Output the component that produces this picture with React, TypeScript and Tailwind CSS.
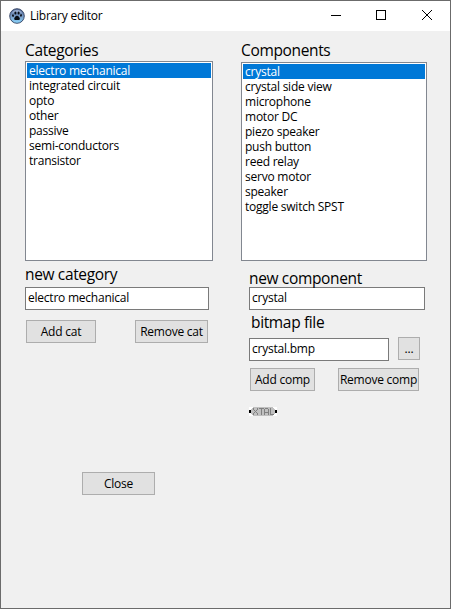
import type { ReactNode } from "react";

const categories = [
  "electro mechanical",
  "integrated circuit",
  "opto",
  "other",
  "passive",
  "semi-conductors",
  "transistor",
];

const components = [
  "crystal",
  "crystal side view",
  "microphone",
  "motor DC",
  "piezo speaker",
  "push button",
  "reed relay",
  "servo motor",
  "speaker",
  "toggle switch SPST",
];

function Label({ children, className = "" }: { children: ReactNode; className?: string }) {
  return (
    <div className={`h-5 whitespace-nowrap text-[15.5px] leading-[19px] tracking-[-0.35px] ${className}`}>
      {children}
    </div>
  );
}

function ListBox({ items, className }: { items: string[]; className: string }) {
  return (
    <ul className={`border border-[#828790] bg-white p-px ${className}`}>
      {items.map((item, i) => (
        <li
          key={item}
          className={`h-[15px] whitespace-nowrap pl-0.5 leading-[15px] ${
            i === 0 ? "bg-[#0078d7] text-white" : ""
          }`}
        >
          {item}
        </li>
      ))}
    </ul>
  );
}

function Field({ value, className }: { value: string; className: string }) {
  return (
    <div className={`h-[23px] border border-[#7a7a7a] bg-white pl-0.5 leading-[20px] ${className}`}>
      {value}
    </div>
  );
}

function Button({ children, className }: { children: ReactNode; className: string }) {
  return (
    <button
      className={`flex h-[23px] shrink-0 items-center justify-center whitespace-nowrap border border-[#adadad] bg-[#e1e1e1] pt-px ${className}`}
    >
      {children}
    </button>
  );
}

function PawIcon() {
  return (
    <svg className="ml-2 h-4 w-4" viewBox="0 0 16 16">
      <defs>
        <linearGradient id="ball" x1="0" y1="0" x2="0" y2="1">
          <stop offset="0" stopColor="#49608f" />
          <stop offset="0.5" stopColor="#7899c4" />
          <stop offset="1" stopColor="#8bd8ff" />
        </linearGradient>
      </defs>
      <circle cx="8" cy="8" r="7.3" fill="url(#ball)" stroke="#31405f" strokeWidth="0.9" />
      <path d="M3 5.5Q4 1.8 8 1.8T13 5.5Q8 2.8 3 5.5Z" fill="#a9bbda" opacity="0.7" />
      <g fill="#080c14">
        <ellipse cx="4" cy="7.600" rx="0.9" ry="1.3" transform="rotate(-20 4 7.600)" />
        <ellipse cx="6.4" cy="5.100" rx="1" ry="1.5" />
        <ellipse cx="9.6" cy="5.100" rx="1" ry="1.5" />
        <ellipse cx="12" cy="7.400" rx="0.9" ry="1.3" transform="rotate(20 12 7.400)" />
        <path d="M8 7.8c1.4 0 3.1 2 2.900 3.3-.2 1.2-1.6.9-2.900.9s-2.700.3-2.800-.9C5 9.900 6.600 7.800 8 7.800Z" />
      </g>
    </svg>
  );
}

function CrystalBitmap() {
  return (
    <svg className="h-[9px] w-7" viewBox="0 0 28 9" shapeRendering="crispEdges">
      <rect width="28" height="9" fill="#fff" />
      <path d="M4 0H24V1H25V2H26V3H27V6H26V7H25V8H24V9H4V8H3V7H2V6H1V3H2V2H3V1H4Z" fill="#c0c0c0" />
      <path d="M0 3H2V6H0ZM26 3H28V6H26Z" fill="#000" />
      <g fill="#808080">
        <path d="M4 1h1v2h-1zM8 1h1v2h-1zM5 3h1v1h-1zM7 3h1v1h-1zM6 4h1v1h-1zM5 5h1v1h-1zM7 5h1v1h-1zM4 6h1v2h-1zM8 6h1v2h-1z" />
        <path d="M10 1h5v1h-5zM12 2h1v6h-1z" />
        <path d="M16 1h3v1h-3zM15 2h1v6h-1zM19 2h1v6h-1zM16 5h3v1h-3z" />
        <path d="M21 1h1v7h-1zM22 7h3v1h-3z" />
      </g>
    </svg>
  );
}

export default function App() {
  return (
    <div className="flex h-[609px] w-[451px] flex-col overflow-hidden border border-[#6b6b6b] bg-[#f0f0f0] font-['Open_Sans','Noto_Sans',sans-serif] text-[12px] tracking-[-0.23px] text-black">
      <header className="flex h-[30px] shrink-0 items-center bg-white">
        <PawIcon />
        <span className="ml-[5px] flex-1 whitespace-nowrap">Library editor</span>
        <svg className="h-[30px] w-[119px]" viewBox="0 0 119 30" fill="none" stroke="#000">
          <path d="M0 14.500H10M45.500 9.500H54.500V18.500H45.500Z" shapeRendering="crispEdges" />
          <path d="M91 9L101 19M101 9L91 19" />
        </svg>
      </header>
      <main className="flex pl-6">
        <section className="w-[216px]">
          <Label className="mt-[10px]">Categories</Label>
          <ListBox items={categories} className="h-[200px] w-[188px]" />
          <Label className="mt-1">new category</Label>
          <Field value="electro mechanical" className="mt-0.5 w-[184px]" />
          <div className="mt-[10px] flex pl-px">
            <Button className="w-[70px]">Add cat</Button>
            <Button className="ml-[39px] w-[73px]">Remove cat</Button>
          </div>
          <Button className="ml-[57px] mt-[129px] w-[73px]">Close</Button>
        </section>
        <section className="w-[190px]">
          <Label className="mt-[10px]">Components</Label>
          <ListBox items={components} className="mt-px h-[199px] w-[186px]" />
          <div className="pl-2">
            <Label className="mt-2">new component</Label>
            <Field value="crystal" className="-mt-0.5 w-[176px]" />
            <Label className="mt-[3px] pl-0.5">bitmap file</Label>
            <div className="mt-1 flex items-start">
              <Field value="crystal.bmp" className="mt-px w-[140px]" />
              <Button className="ml-[9px] w-[22px]">...</Button>
            </div>
            <div className="mt-[7px] flex pl-px">
              <Button className="w-[65px]">Add comp</Button>
              <Button className="ml-[23px] w-[81px]">Remove comp</Button>
            </div>
            <div className="mt-4">
              <CrystalBitmap />
            </div>
          </div>
        </section>
      </main>
    </div>
  );
}
